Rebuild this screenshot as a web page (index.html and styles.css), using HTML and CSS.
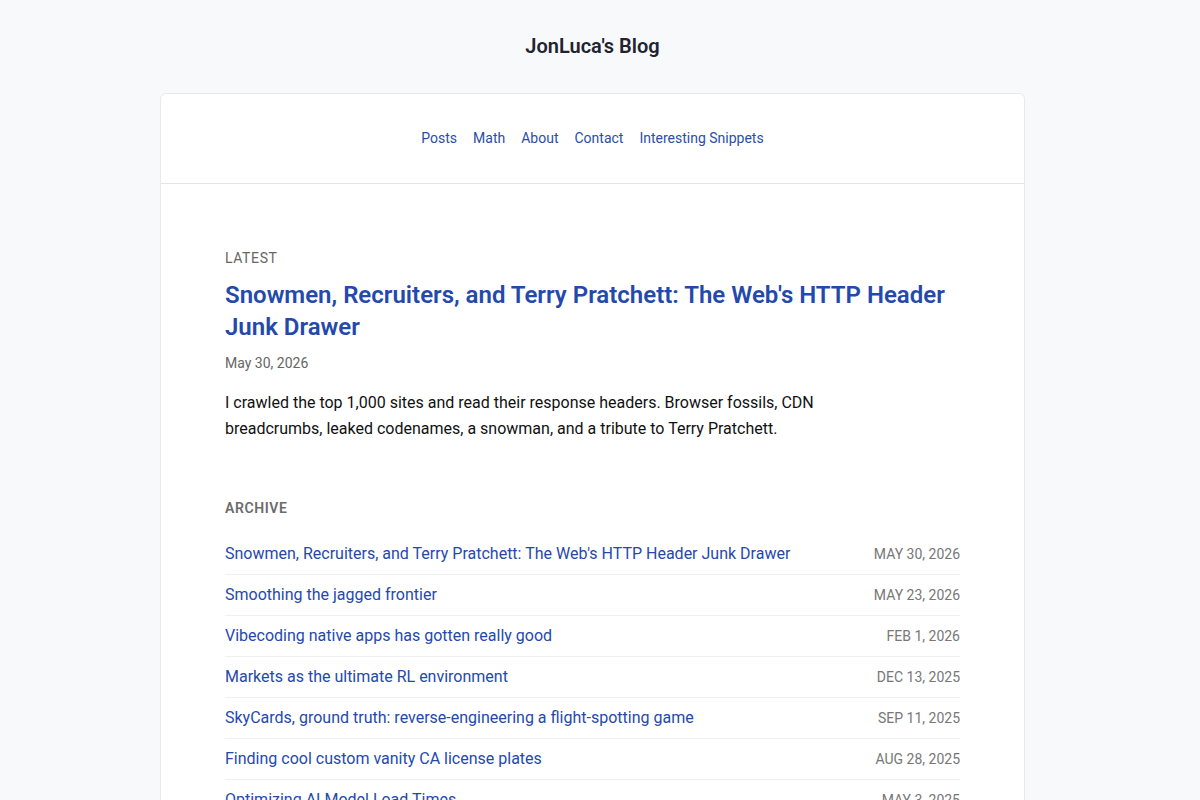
FILE: index.html
```html
<!DOCTYPE html>
<html lang="en">
<head>
    <meta charset="UTF-8">
    <meta name="viewport" content="width=device-width, initial-scale=1.0">
    <title>JonLuca's Blog</title>
    <link rel="stylesheet" href="styles.css">
</head>
<body>
    <header class="site-header">
        <h1 class="site-title">JonLuca's Blog</h1>
    </header>

    <div class="card">
        <nav class="nav">
            <a href="#">Posts</a>
            <a href="#">Math</a>
            <a href="#">About</a>
            <a href="#">Contact</a>
            <a href="#">Interesting Snippets</a>
        </nav>

        <main class="content">
            <section class="latest">
                <div class="label">Latest</div>
                <h2 class="latest-title"><a href="#">Snowmen, Recruiters, and Terry Pratchett: The Web's HTTP Header Junk Drawer</a></h2>
                <div class="latest-date">May 30, 2026</div>
                <p class="latest-desc">I crawled the top 1,000 sites and read their response headers. Browser fossils, CDN breadcrumbs, leaked codenames, a snowman, and a tribute to Terry Pratchett.</p>
            </section>

            <section class="archive">
                <div class="label label-bold">Archive</div>
                <ul class="post-list">
                    <li><a href="#">Snowmen, Recruiters, and Terry Pratchett: The Web's HTTP Header Junk Drawer</a><span class="date">May 30, 2026</span></li>
                    <li><a href="#">Smoothing the jagged frontier</a><span class="date">May 23, 2026</span></li>
                    <li><a href="#">Vibecoding native apps has gotten really good</a><span class="date">Feb 1, 2026</span></li>
                    <li><a href="#">Markets as the ultimate RL environment</a><span class="date">Dec 13, 2025</span></li>
                    <li><a href="#">SkyCards, ground truth: reverse-engineering a flight-spotting game</a><span class="date">Sep 11, 2025</span></li>
                    <li><a href="#">Finding cool custom vanity CA license plates</a><span class="date">Aug 28, 2025</span></li>
                    <li><a href="#">Optimizing AI Model Load Times</a><span class="date">May 3, 2025</span></li>
                    <li><a href="#">Building a personal search engine</a><span class="date">Mar 14, 2025</span></li>
                </ul>
            </section>
        </main>
    </div>
</body>
</html>
```

FILE: styles.css
```css
body {
    font-family: Roboto, "Liberation Sans", Arial, sans-serif;
    margin: 0;
    padding-right: 15px;
    background-color: #f8f9fa;
    color: #111;
}
a {
    color: #2449ad;
    text-decoration: none;
}
.site-header {
    padding-top: 32px;
    padding-bottom: 33px;
    text-align: center;
}
.site-title {
    margin: 0;
    font-size: 20px;
    line-height: 28px;
    font-weight: 600;
    color: #1f2430;
}
.card {
    width: 863px;
    margin: 0 auto;
    background: white;
    border: 1px solid #e9e9e9;
    border-radius: 6px;
}
.nav {
    display: flex;
    justify-content: center;
    gap: 16px;
    padding: 33px 0 34px;
    font-size: 14px;
    line-height: 22px;
    border-bottom: 1px solid #e5e5e5;
}
.nav a {
    color: #2a4ea6;
}
.content {
    padding: 64px 64px 64px;
}
.label {
    font-size: 14px;
    line-height: 20px;
    letter-spacing: 0.6px;
    text-transform: uppercase;
    color: #666;
}
.label-bold {
    font-weight: 600;
    color: #6b6b6b;
}
.latest-title {
    margin: 11px 0 0;
    font-size: 24px;
    line-height: 32px;
    font-weight: 600;
}
.latest-title a {
    color: #2449ad;
}
.latest-date {
    margin-top: 10px;
    font-size: 14px;
    line-height: 20px;
    color: #666;
}
.latest-desc {
    margin: 17px 0 0;
    max-width: 640px;
    font-size: 16px;
    line-height: 26px;
    color: #111;
}
.archive {
    margin-top: 56px;
}
.post-list {
    list-style: none;
    margin: 16px 0 0;
    padding: 0;
}
.post-list li {
    display: flex;
    justify-content: space-between;
    align-items: baseline;
    padding: 10px 0;
    border-bottom: 1px solid #f0f0f0;
    font-size: 16px;
    line-height: 20px;
}
.post-list .date {
    font-size: 14px;
    text-transform: uppercase;
    color: #777;
    white-space: nowrap;
}
```
